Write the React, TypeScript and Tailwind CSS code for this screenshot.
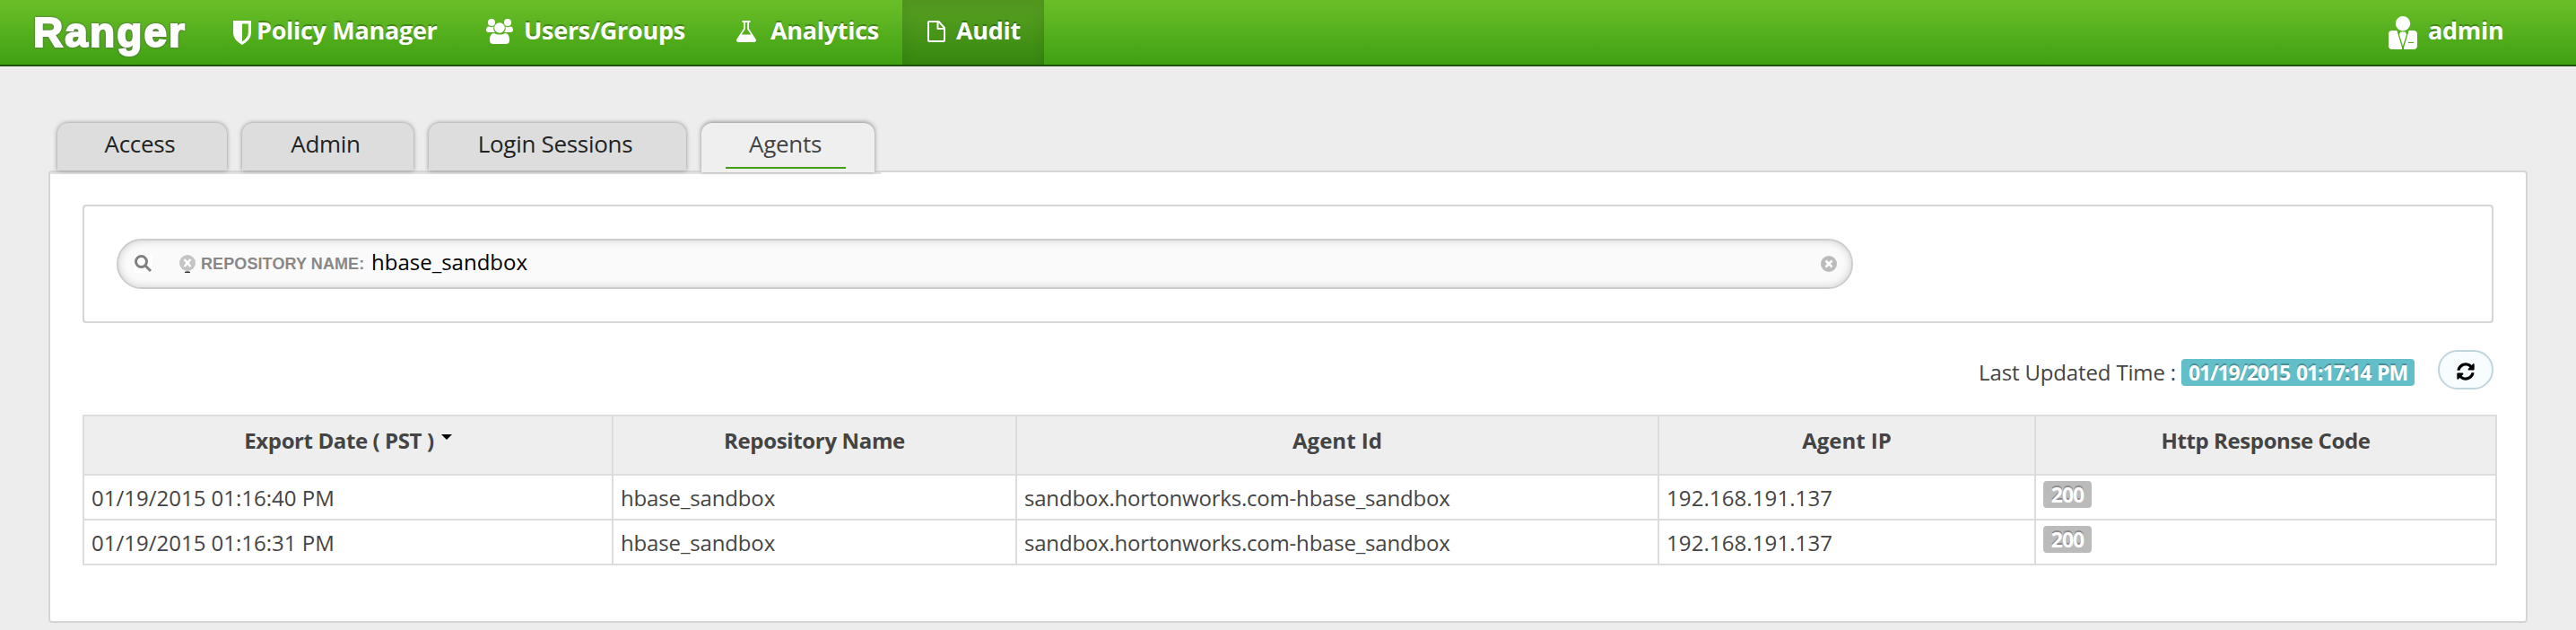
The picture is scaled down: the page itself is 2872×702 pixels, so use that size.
import React from "react";
import { FaSyncAlt } from "react-icons/fa";

const FONT = "font-['Open_Sans',sans-serif]";

const shadowText = "[text-shadow:0_-2px_0_rgba(0,0,0,0.25)]";

function Shield() {
  return (
    <svg viewBox="0 0 20 27" className="h-[27px] w-5 shrink-0 fill-white">
      <path fillRule="evenodd" d="M0 0H20V13C20 20 15 24 10 27C5 24 0 20 0 13ZM10 3.4V23.4C14 20.700 16.800 17.500 16.800 13V3.400Z" />
    </svg>
  );
}

function Group() {
  return (
    <svg viewBox="0 0 30 28" className="h-7 w-[30px] shrink-0 fill-white">
      <circle cx="6" cy="4" r="4" />
      <circle cx="24" cy="4" r="4" />
      <circle cx="15" cy="10" r="5.8" />
      <path d="M3 8.500C4.500 9.500 7 9.500 8.500 8.500C7.800 11.500 8.500 13.500 10 15H3C1 15 0 14 0 12.500C0 10.500 1 8.500 3 8.500Z" />
      <path d="M27 8.500C25.500 9.500 23 9.500 21.500 8.500C22.200 11.500 21.500 13.500 20 15H27C29 15 30 14 30 12.500C30 10.500 29 8.500 27 8.500Z" />
      <path d="M9 16C12 18 18 18 21 16C25 16 26 20 26 24C26 27 24 28 22 28H8C6 28 4 27 4 24C4 20 5 16 9 16Z" />
    </svg>
  );
}

function Flask() {
  return (
    <svg viewBox="0 0 22 24" className="h-6 w-[22px] shrink-0 fill-white">
      <path fillRule="evenodd" d="M6.500 0H15.500V2H14V9L21.500 20.500C22.700 22.500 21.500 24 19.500 24H2.500C.5 24 -.7 22.500 .5 20.500L8 9V2H6.500ZM9.800 2V9.500L5.800 15.500H16.200L12.200 9.500V2Z" />
    </svg>
  );
}

function FileOutline() {
  return (
    <svg viewBox="0 0 20 24" className="mt-[7px] h-6 w-5 shrink-0" fill="none" stroke="white" strokeWidth="2" strokeLinejoin="round">
      <path d="M1 2Q1 1 2 1H12.500L19 8V22Q19 23 18 23H2Q1 23 1 22ZM11.500 1V9H19" />
    </svg>
  );
}

function UserTie() {
  return (
    <svg viewBox="0 0 32 37" className="h-[37px] w-8 shrink-0 fill-white">
      <circle cx="16" cy="8.200" r="8.200" />
      <path d="M4 16H9.300L15 35V37H4C1.500 37 0 35.500 0 33V20C0 17.500 1.500 16 4 16Z" />
      <path fillRule="evenodd" d="M28 16H22.700L17 35V37H28C30.500 37 32 35.500 32 33V20C32 17.500 30.500 16 28 16ZM22 29V30H28V29Z" />
      <path d="M13.300 17.500H18.700L20 20.500L16 33.500L12 20.500Z" />
    </svg>
  );
}

function Header() {
  return (
    <header className="flex h-[74px] border-b-2 border-[#1f5210] bg-linear-to-b from-[#6abf28] to-[#3fa012] text-[27px] font-bold leading-[36px] tracking-[-0.3px] text-white">
      <div className="w-[260px] pl-[37px] pt-[10px] font-['Liberation_Sans',sans-serif] text-[46px] leading-[52px] tracking-[2.100px] [-webkit-text-stroke:2px_white] [filter:drop-shadow(0_0_1px_#555)]">
        Ranger
      </div>
      <div className={`flex w-[282px] pt-4 ${shadowText}`}>
        <span className="mt-[7px]"><Shield /></span>
        <span className="ml-1.5 whitespace-nowrap">Policy Manager</span>
      </div>
      <div className={`flex w-[278px] pt-4 ${shadowText}`}>
        <span className="mt-[5px]"><Group /></span>
        <span className="ml-3 whitespace-nowrap">Users/Groups</span>
      </div>
      <div className={`flex w-[186px] pt-4 ${shadowText}`}>
        <span className="ml-px mt-[7px]"><Flask /></span>
        <span className="ml-4 whitespace-nowrap">Analytics</span>
      </div>
      <div className={`flex w-[158px] bg-black/15 pl-7 pt-4 shadow-[inset_0_6px_16px_rgba(0,0,0,0.1)] ${shadowText}`}>
        <FileOutline />
        <span className="ml-3 whitespace-nowrap">Audit</span>
      </div>
      <div className={`ml-auto mr-[81px] flex w-[128px] pt-4 ${shadowText}`}>
        <span className="mt-0.5"><UserTie /></span>
        <span className="ml-3 whitespace-nowrap">admin</span>
      </div>
    </header>
  );
}

const tabs = [
  { name: "Access", cls: "ml-1.5 w-[189px]" },
  { name: "Admin", cls: "ml-[17px] w-[191px]" },
  { name: "Login Sessions", cls: "ml-[17px] w-[287px]" },
];

function Tabs() {
  return (
    <nav className="flex h-[57px] pl-[3.500px] text-[26px] leading-[47px] tracking-[-0.3px] text-[#222]">
      {tabs.map((t) => (
        <div key={t.name} className={`${t.cls} mb-1 rounded-t-xl bg-[#ddd] pr-1 text-center shadow-[0_0_5px_#888]`}>
          {t.name}
        </div>
      ))}
      <div className="relative z-10 mb-0.5 ml-[17px] flex w-[193px] flex-col items-center rounded-t-xl bg-[#efefef] pr-[5px] text-[#444] shadow-[0_-1px_5px_#888]">
        <span>Agents</span>
        <span className="mt-0.5 h-0.5 w-[134px] bg-[#3fa012]" />
      </div>
    </nav>
  );
}

function ClearIcon() {
  return (
    <svg viewBox="0 0 18 18" className="size-[18px] shrink-0">
      <circle cx="9" cy="9" r="9" fill="#bbb" />
      <path d="M5.500 5.500L12.500 12.500M12.500 5.500L5.500 12.500" stroke="white" strokeWidth="2.600" />
    </svg>
  );
}

function RemoveIcon() {
  return (
    <svg viewBox="0 0 18 20" className="h-5 w-[18px] shrink-0">
      <circle cx="9" cy="9" r="9" fill="#c4c4c4" />
      <path d="M5.500 5L12.500 13M12.500 5L5.500 13" stroke="white" strokeWidth="2.600" />
      <path d="M6 19Q9 17.500 12 19V20H6Z" fill="#333" />
    </svg>
  );
}

function Search() {
  return (
    <div className="h-[132px] rounded border-2 border-[#d5d5d5] pl-9 pt-9">
      <div className="flex h-14 w-[1936px] items-center rounded-[28px] border-2 border-[#ccc] bg-[#fafafa] pl-[18px] pr-4 shadow-[inset_0_0_8px_#ccc]">
        <svg viewBox="0 0 20 20" className="size-5 bg-white" fill="none" stroke="#808080" strokeWidth="3">
          <circle cx="7.500" cy="7.500" r="6" />
          <path d="M12 12L18 18" />
        </svg>
        <span className="ml-[30px]"><RemoveIcon /></span>
        <span className="ml-1.5 w-[190px] whitespace-nowrap font-['Liberation_Sans',sans-serif] text-[18px] font-bold tracking-[0.1px] text-[#888]">REPOSITORY NAME:</span>
        <span className="pb-1 text-[24px] text-black">hbase_sandbox</span>
        <span className="ml-auto"><ClearIcon /></span>
      </div>
    </div>
  );
}

const columns = [
  { name: "Export Date ( PST )", cls: "tracking-[-0.4px]", sorted: true },
  { name: "Repository Name", cls: "tracking-[-0.35px]" },
  { name: "Agent Id", cls: "" },
  { name: "Agent IP", cls: "" },
  { name: "Http Response Code", cls: "tracking-[-0.4px]" },
];
const cellTracking = ["", "tracking-[-0.15px]", "tracking-[-0.2px]", "tracking-[0.1px]"];
const rows = [
  ["01/19/2015 01:16:40 PM", "hbase_sandbox", "sandbox.hortonworks.com-hbase_sandbox", "192.168.191.137"],
  ["01/19/2015 01:16:31 PM", "hbase_sandbox", "sandbox.hortonworks.com-hbase_sandbox", "192.168.191.137"],
];
const GRID = "grid grid-cols-[590px_450px_716px_420px_514px]";

function Table() {
  return (
    <div className="mt-7 w-[2692px] border-l-2 border-t-2 border-[#ddd]">
      <div className={`${GRID} h-[66px] bg-[#eee] text-center text-[24px] font-bold leading-[54px]`}>
        {columns.map((c) => (
          <div key={c.name} className={`border-b-2 border-r-2 border-[#ddd] ${c.cls}`}>
            {c.name}
            {c.sorted && <span className="ml-2 inline-block border-x-[6px] border-t-[6px] border-x-transparent border-t-black align-[10px]" />}
          </div>
        ))}
      </div>
      {rows.map((r) => (
        <div key={r[0]} className={`${GRID} grid-rows-[50px] text-[24px] leading-[50px]`}>
          {r.map((c, i) => (
            <div key={i} className={`border-b-2 border-r-2 border-[#ddd] pl-2 ${cellTracking[i]}`}>{c}</div>
          ))}
          <div className="border-b-2 border-r-2 border-[#ddd] pl-2 pt-1.5">
            <span className={`flex h-[30px] w-[54px] items-center justify-center rounded bg-[#bbb] text-[23px] font-bold tracking-[-1px] text-white ${shadowText}`}>200</span>
          </div>
        </div>
      ))}
    </div>
  );
}

export default function App() {
  return (
    <div className={`h-[702px] w-[2872px] overflow-hidden bg-[#ededed] text-[#444] ${FONT}`}>
      <Header />
      <main className="ml-[54px] w-[2764px] pt-[63px]">
        <Tabs />
        <section className="-mt-1 h-[504px] rounded border-2 border-[#d5d5d5] bg-white">
          <div className="h-0.5 w-[926px] bg-[#e2e2e2]" />
          <div className="ml-9 mt-[34px] w-[2688px]">
            <Search />
            <div className="mt-[30px] flex h-11 justify-end text-[24px]">
              <span className="mt-[7px] leading-[36px] tracking-[-0.15px]">Last Updated Time :</span>
              <span className={`ml-1.5 mt-2.5 flex h-[30px] w-[260px] items-center justify-center whitespace-nowrap rounded bg-[#62bfc9] text-[23px] font-bold tracking-[-1.100px] text-white [word-spacing:2px] ${shadowText}`}>
                01/19/2015 01:17:14 PM
              </span>
              <span className="ml-[26px] flex h-11 w-[62px] items-center justify-center rounded-[22px] border-2 border-[#bfd5dd] bg-[#f7fdff]">
                <FaSyncAlt className="mt-1 size-5 text-black" />
              </span>
            </div>
            <Table />
          </div>
        </section>
      </main>
    </div>
  );
}
